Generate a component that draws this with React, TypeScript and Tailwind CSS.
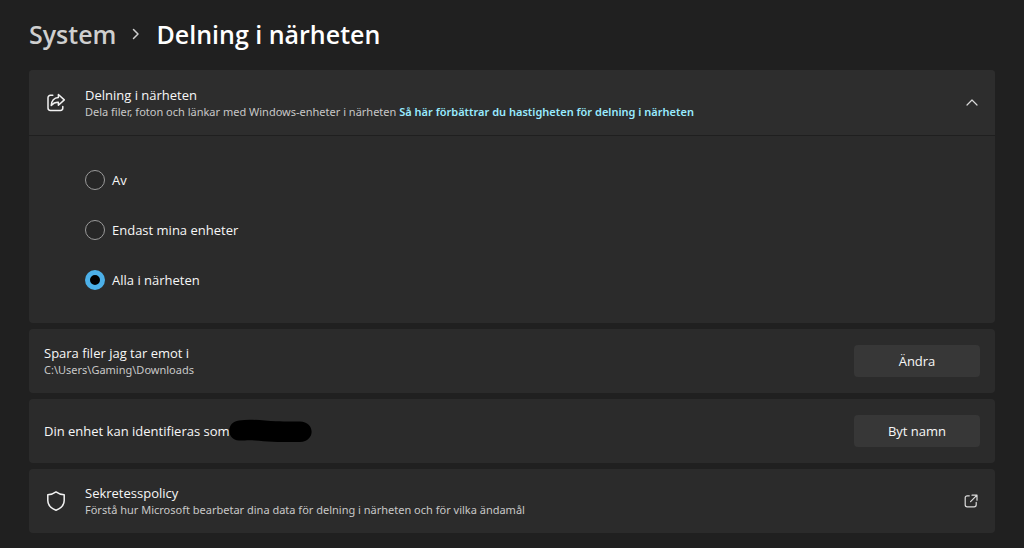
import { useState } from "react";
import type { ReactNode } from "react";

const OPTIONS = [
  { id: "off", label: "Av" },
  { id: "own", label: "Endast mina enheter" },
  { id: "all", label: "Alla i närheten" },
];

function ShareIcon() {
  return (
    <svg viewBox="0 0 20 20" className="size-5" fill="none" stroke="#f2f2f2" strokeWidth="1.5" strokeLinecap="round" strokeLinejoin="round" aria-hidden="true">
      <path d="M6.8 2.3H4.4A2.4 2.4 0 0 0 2 4.7v10.4a2.400 2.400 0 0 0 2.400 2.400h10a2.400 2.400 0 0 0 2.400-2.400v-1.500" />
      <path d="M12.4 1.500 18.300 6.900l-5.900 5.400V9.300c-3.300-.1-5.200.9-7.200 3.200.4-4.600 3-7.700 7.200-8Z" />
    </svg>
  );
}

function ShieldIcon() {
  return (
    <svg viewBox="0 0 20 20" className="size-5" fill="none" stroke="#f2f2f2" strokeWidth="1.5" strokeLinejoin="round" aria-hidden="true">
      <path d="M10 .9C12.3 2.6 15 3.6 18.2 3.8V9.5c0 4.500-2.800 7.700-8.200 9.700-5.400-2-8.200-5.200-8.200-9.700V3.800C5 3.600 7.700 2.600 10 .9Z" />
    </svg>
  );
}

function OpenIcon() {
  return (
    <svg viewBox="0 0 14 14" className="size-3.5" fill="none" stroke="#dcdcdc" strokeWidth="1.2" strokeLinecap="round" strokeLinejoin="round" aria-hidden="true">
      <path d="M5.3 1.800H3.200A2 2 0 0 0 1.200 3.800v7A2 2 0 0 0 3.200 12.800h7a2 2 0 0 0 2-2V8.300" />
      <path d="M8 1.200h5v5M13 1.200 6.600 7.600" />
    </svg>
  );
}

function Card({ children }: { children: ReactNode }) {
  return <div className="flex min-h-16 items-center rounded bg-[#2b2b2b] px-[15px]">{children}</div>;
}

function ActionButton({ children }: { children: ReactNode }) {
  return (
    <button type="button" className="h-8 w-[126px] rounded bg-[#373737] text-[13px] text-[#f7f7f7]">
      {children}
    </button>
  );
}

export default function App() {
  const [selected, setSelected] = useState("all");
  const [open, setOpen] = useState(true);

  return (
    <div className="min-h-screen bg-[#202020] px-[29px] pt-[15px] pb-[15px] font-['Open_Sans','Noto_Sans',sans-serif] text-[13px] leading-[18px] text-[#f7f7f7]">
      <h1 className="flex h-[38px] items-center text-[25px] leading-[38px] font-semibold">
        <a href="#system" className="text-[#cfcfcf]">System</a>
        <svg viewBox="0 0 8 12" className="mx-4 h-3 w-2" fill="none" stroke="#cfcfcf" strokeWidth="1.5" strokeLinecap="round" strokeLinejoin="round" aria-hidden="true">
          <path d="m1.500 1.500 4.500 4.500-4.500 4.500" />
        </svg>
        <span className="text-white">Delning i närheten</span>
      </h1>

      <main className="mt-[17px] flex flex-col gap-[6px]">
        <section className="rounded bg-[#2b2b2b]">
          <div className="flex h-[66px] items-center rounded-t border-b border-[#1f1f1f] bg-[#2d2d2d] px-[17px]">
            <ShareIcon />
            <div className="ml-[19px] flex-1">
              <h2>Delning i närheten</h2>
              <p className="font-['Noto_Sans',sans-serif] text-[11px] leading-4 text-[#c8c8c8]">
                Dela filer, foton och länkar med Windows-enheter i närheten{" "}
                <a href="#speed" className="font-semibold text-[#99ebff]">Så här förbättrar du hastigheten för delning i närheten</a>
              </p>
            </div>
            <button type="button" aria-label="Visa alternativ" aria-expanded={open} onClick={() => setOpen(!open)}>
              <svg viewBox="0 0 12 8" className="h-2 w-3" fill="none" stroke="#d8d8d8" strokeWidth="1.2" strokeLinecap="round" strokeLinejoin="round" aria-hidden="true">
                <path d={open ? "m1 6 5-5 5 5" : "m1 1.500 5 5 5-5"} />
              </svg>
            </button>
          </div>
          {open && (
            <fieldset aria-label="Delning i närheten" className="flex flex-col gap-[30px] px-14 pt-[34px] pb-[33px]">
              {OPTIONS.map((option) => (
                <label key={option.id} className="flex h-5 items-center gap-[7px]">
                  <input
                    type="radio"
                    name="sharing"
                    value={option.id}
                    checked={selected === option.id}
                    onChange={() => setSelected(option.id)}
                    className="size-5 appearance-none rounded-full border border-[#9a9a9a] bg-[#272727] checked:border-5 checked:border-[#4cb0e8] checked:bg-black"
                  />
                  {option.label}
                </label>
              ))}
            </fieldset>
          )}
        </section>

        <Card>
          <div className="flex-1">
            <h2>Spara filer jag tar emot i</h2>
            <p className="font-['Noto_Sans',sans-serif] text-[11px] leading-4 text-[#c8c8c8]">C:\Users\Gaming\Downloads</p>
          </div>
          <ActionButton>Ändra</ActionButton>
        </Card>

        <Card>
          <div className="flex flex-1 items-center">
            <h2>Din enhet kan identifieras som</h2>
            <svg viewBox="0 0 86 24" className="-ml-1 h-6 w-[86px]" aria-hidden="true">
              <path d="M13 1.500C26-.5 38 2 50 2.300c9 .3 16 .2 24 .2 15 0 16 20 0 20.500-16 .3-33-.5-45-1.600-8-.5-10 .2-16 .1C0 20.500 0 3 13 1.500Z" fill="#000" />
            </svg>
          </div>
          <ActionButton>Byt namn</ActionButton>
        </Card>

        <Card>
          <a href="#privacy" className="flex flex-1 items-center px-0.5">
            <ShieldIcon />
            <span className="ml-[19px] flex flex-1 flex-col">
              <span>Sekretesspolicy</span>
              <span className="font-['Noto_Sans',sans-serif] text-[11px] leading-4 text-[#c8c8c8]">Förstå hur Microsoft bearbetar dina data för delning i närheten och för vilka ändamål</span>
            </span>
            <OpenIcon />
          </a>
        </Card>
      </main>
    </div>
  );
}
